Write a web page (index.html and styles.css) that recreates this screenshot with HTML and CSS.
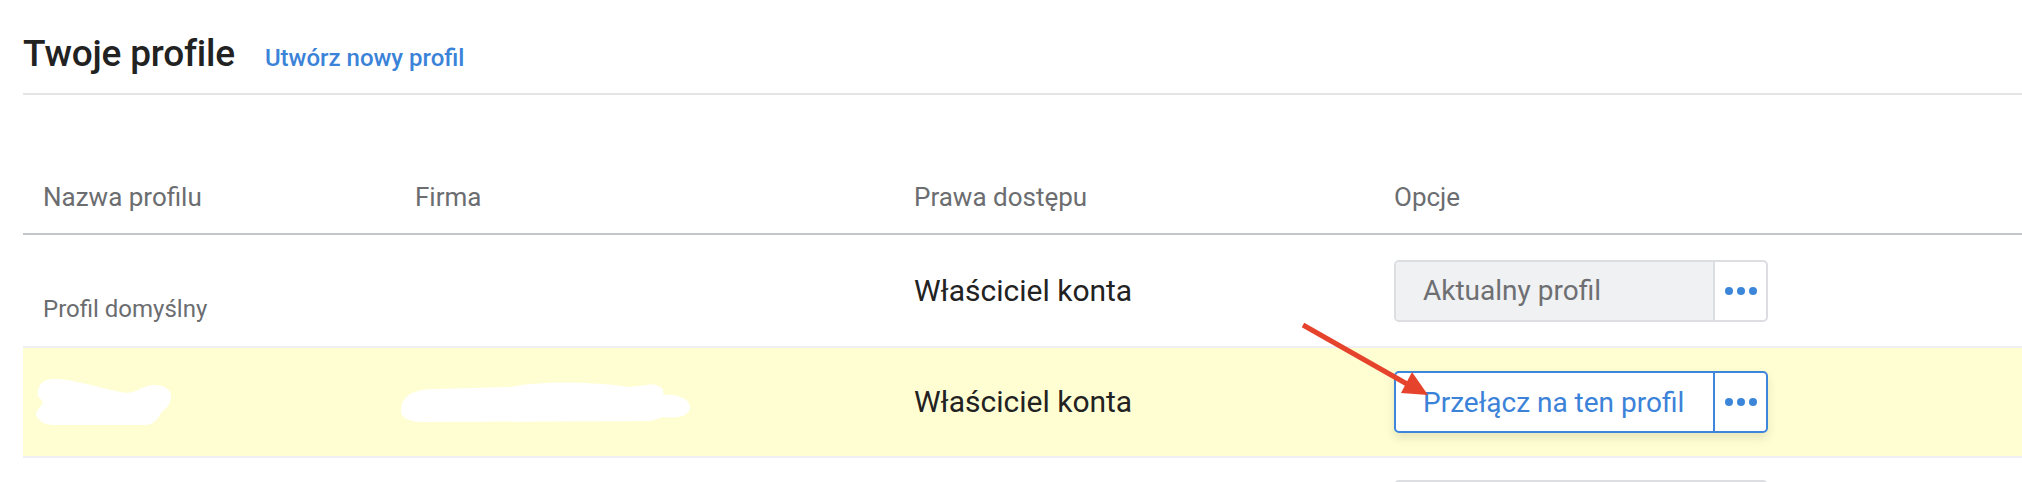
FILE: index.html
```html
<!DOCTYPE html>
<html lang="pl">
<head>
<meta charset="utf-8">
<title>Twoje profile</title>
<link rel="stylesheet" href="styles.css">
</head>
<body>
<div class="page">
  <header class="page-head">
    <h1 class="title">Twoje profile</h1>
    <a class="create-link" href="#">Utwórz nowy profil</a>
  </header>

  <div class="table">
    <div class="row head">
      <div class="cell">Nazwa profilu</div>
      <div class="cell">Firma</div>
      <div class="cell">Prawa dostępu</div>
      <div class="cell">Opcje</div>
    </div>

    <div class="row first">
      <div class="cell name-low">Profil domyślny</div>
      <div class="cell"></div>
      <div class="cell role">Właściciel konta</div>
      <div class="cell">
        <div class="btn-group current">
          <span class="btn-main">Aktualny profil</span>
          <span class="btn-more"><i class="dot"></i><i class="dot"></i><i class="dot"></i></span>
        </div>
      </div>
    </div>

    <div class="row highlight">
      <div class="cell">
        <svg class="blob blob-name" width="136" height="48" viewBox="0 0 136 48">
          <path d="M2 12 C4 4 10 1 18 1 C40 1 70 12 90 15 C100 15 108 7 118 7 C130 7 136 13 135 20 C134 28 128 32 125 35 C121 42 118 46 110 47 L18 47 C8 47 2 42 0 37 C0 32 6 28 7 24 C4 20 0 18 2 12 Z" fill="#ffffff"/>
        </svg>
      </div>
      <div class="cell">
        <svg class="blob blob-company" width="290" height="42" viewBox="0 0 290 42">
          <path d="M0 30 C0 14 14 8 34 8 L110 6 C135 0 190 0 228 6 L246 4 C258 2 264 8 262 14 C278 12 290 19 289 27 C288 35 276 38 262 36 L250 40 L22 41 C8 41 0 37 0 30 Z" fill="#ffffff"/>
        </svg>
      </div>
      <div class="cell role">Właściciel konta</div>
      <div class="cell">
        <div class="btn-group switch">
          <span class="btn-main">Przełącz na ten profil</span>
          <span class="btn-more"><i class="dot"></i><i class="dot"></i><i class="dot"></i></span>
        </div>
      </div>
    </div>

    <div class="row">
      <div class="cell"></div>
      <div class="cell"></div>
      <div class="cell"></div>
      <div class="cell">
        <div class="btn-group current">
          <span class="btn-main"></span>
          <span class="btn-more"></span>
        </div>
      </div>
    </div>
  </div>

  <svg class="annotation" width="140" height="85" viewBox="0 0 140 85">
    <line x1="8" y1="7" x2="112" y2="66" stroke="#e6432c" stroke-width="5"/>
    <polygon points="117,54 106,75 133,77" fill="#e6432c"/>
  </svg>
</div>
</body>
</html>
```

FILE: styles.css
```css
html, body {
  margin: 0;
  padding: 0;
  background: #ffffff;
}

body {
  width: 2022px;
  height: 482px;
  overflow: hidden;
  font-family: Roboto, "Liberation Sans", Arial, sans-serif;
}

.page {
  position: relative;
  padding-left: 23px;
}

.page-head {
  display: flex;
  align-items: baseline;
  gap: 30px;
  padding-top: 34px;
  padding-bottom: 19px;
  border-bottom: 2px solid #e4e4e4;
}

.title {
  margin: 0;
  font-size: 37px;
  line-height: 40px;
  font-weight: 500;
  color: #222222;
  letter-spacing: -0.2px;
}

.create-link {
  font-size: 24px;
  font-weight: 500;
  color: #3b83d8;
  text-decoration: none;
}

.row {
  display: grid;
  grid-template-columns: 372px 499px 480px 1fr;
  align-items: center;
  height: 108px;
  border-bottom: 2px solid #eef0f3;
}

.row.head {
  height: auto;
  padding-top: 87px;
  padding-bottom: 21px;
  border-bottom: 2px solid #c4c7ca;
  align-items: end;
}

.row.head .cell {
  font-size: 26px;
  line-height: 30px;
  color: #6b6d70;
}

.row.first {
  height: 111px;
}

.row.highlight {
  background: #fffed3;
}

.cell {
  padding-left: 20px;
  box-sizing: border-box;
  min-width: 0;
}

.name-low {
  align-self: end;
  padding-bottom: 23px;
  font-size: 24px;
  line-height: 27px;
  color: #6b6d70;
}

.role {
  font-size: 30px;
  line-height: 36px;
  color: #222222;
}

.blob {
  display: block;
}

.blob-name {
  margin-left: -7px;
}

.blob-company {
  margin-left: -14px;
}

.btn-group {
  display: inline-flex;
  width: 374px;
  height: 62px;
  box-sizing: border-box;
  border: 2px solid #dcdee2;
  border-radius: 5px;
  overflow: hidden;
  background: #ffffff;
}

.btn-main {
  width: 317px;
  box-sizing: border-box;
  padding-left: 27px;
  display: flex;
  align-items: center;
  font-size: 28px;
}

.btn-more {
  flex: 1;
  display: flex;
  align-items: center;
  justify-content: center;
  gap: 4px;
  border-left: 2px solid #dcdee2;
}

.dot {
  display: block;
  width: 8px;
  height: 8px;
  border-radius: 50%;
  background: #3b86d9;
}

.current .btn-main {
  background: #f0f1f3;
  color: #6e6f72;
}

.switch {
  border-color: #3d86dc;
  box-shadow: 0 5px 10px rgba(120, 120, 80, 0.18);
  overflow: visible;
}

.switch .btn-main {
  color: #3b82d8;
}

.switch .btn-more {
  border-left-color: #3d86dc;
}

.annotation {
  position: absolute;
  left: 1295px;
  top: 318px;
  pointer-events: none;
}
```
